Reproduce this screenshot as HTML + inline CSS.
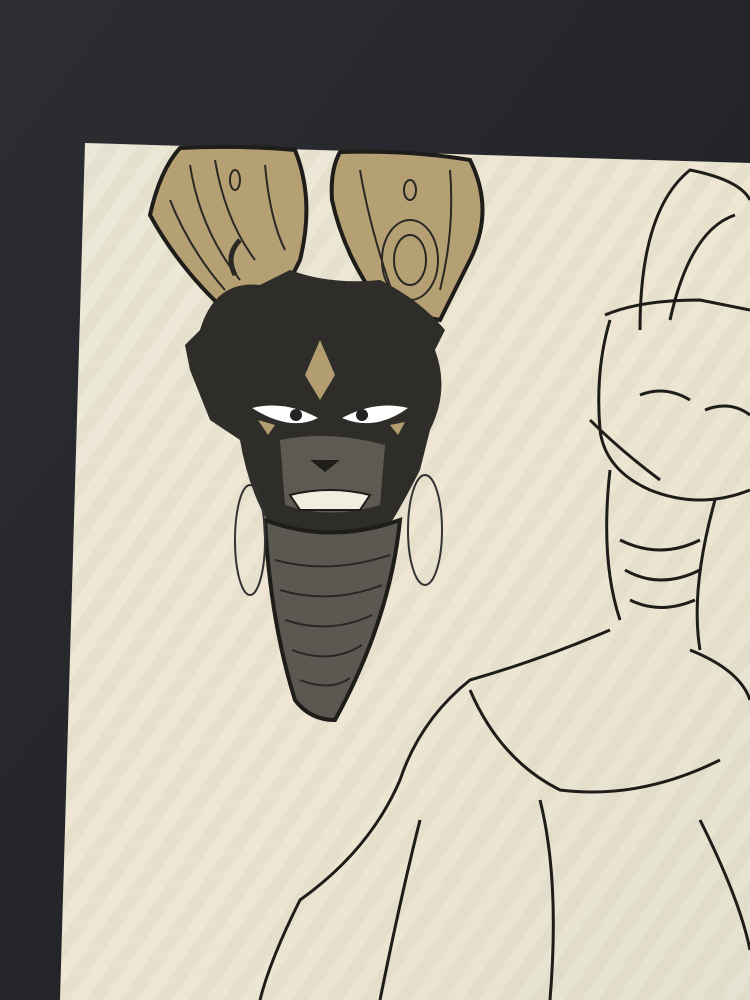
<!DOCTYPE html>
<html><head><meta charset="utf-8"><style>
html,body{margin:0;padding:0;background:#232428;width:750px;height:1000px;overflow:hidden}
svg{display:block}
</style></head><body>
<svg width="750" height="1000" viewBox="0 0 750 1000" xmlns="http://www.w3.org/2000/svg">
<defs>
<linearGradient id="bg" x1="0" y1="0" x2="1" y2="1">
<stop offset="0" stop-color="#2c2e33"/><stop offset="1" stop-color="#1c1d20"/>
</linearGradient>
<linearGradient id="scr" x1="0" y1="0" x2="1" y2="1">
<stop offset="0" stop-color="#ebe8d8"/><stop offset="0.5" stop-color="#eee6d2"/><stop offset="1" stop-color="#e4e2d0"/>
</linearGradient>
<pattern id="moire" width="28" height="28" patternUnits="userSpaceOnUse" patternTransform="rotate(35)">
<rect width="14" height="28" fill="#d8d2be" opacity="0.3"/>
</pattern>
</defs>
<rect width="750" height="1000" fill="url(#bg)"/>
<polygon points="85,143 750,163 750,1000 60,1000" fill="url(#scr)"/>
<polygon points="85,143 750,163 750,1000 60,1000" fill="url(#moire)"/>
<!-- horns -->
<path d="M180,148 Q240,145 295,150 Q315,200 300,260 L280,300 L230,315 Q180,270 150,215 Q160,170 180,148 Z" fill="#b5a074" stroke="#1e1d1a" stroke-width="4"/>
<path d="M340,152 Q410,150 470,160 Q495,210 470,260 L440,320 L385,310 Q345,260 332,200 Q330,170 340,152 Z" fill="#b5a074" stroke="#1e1d1a" stroke-width="4"/>
<g fill="none" stroke="#2a2824" stroke-width="2">
<path d="M190,165 Q200,230 240,280"/><path d="M215,160 Q225,220 255,260"/><path d="M265,165 Q270,220 285,250"/><path d="M170,200 Q190,250 225,290"/>
<ellipse cx="235" cy="180" rx="5" ry="10"/><ellipse cx="410" cy="190" rx="6" ry="10"/>
<ellipse cx="410" cy="260" rx="28" ry="40"/><ellipse cx="410" cy="260" rx="16" ry="25"/>
<path d="M360,170 Q370,230 395,300"/><path d="M450,170 Q455,230 440,290"/>
<path d="M240,240 Q225,255 235,275" stroke-width="5"/>
</g>
<!-- head -->
<path d="M185,345 L200,330 Q215,280 260,285 L290,270 Q330,285 380,280 Q420,300 445,330 L435,350 Q450,390 430,430 L420,470 Q400,510 380,540 L330,555 L280,540 Q250,500 240,440 L210,420 L200,395 L190,370 Z" fill="#2e2d29"/>
<path d="M320,340 L335,375 L320,400 L305,375 Z" fill="#b39e72"/>
<path d="M258,420 L268,435 L275,425 Z" fill="#b39e72"/><path d="M390,425 L398,435 L405,422 Z" fill="#b39e72"/>
<!-- eyes -->
<path d="M252,408 Q285,400 318,418 Q290,432 252,408 Z" fill="#fff"/>
<path d="M342,418 Q375,400 408,408 Q375,432 342,418 Z" fill="#fff"/>
<circle cx="296" cy="415" r="6" fill="#222"/><circle cx="362" cy="415" r="6" fill="#222"/>
<!-- muzzle -->
<path d="M280,440 Q330,430 385,445 L380,505 Q330,520 285,505 Z" fill="#5d5a52"/>
<path d="M290,495 Q330,485 370,495 L360,510 L300,510 Z" fill="#f1eedf" stroke="#1e1d1a" stroke-width="2"/>
<path d="M310,460 L340,460 L325,472 Z" fill="#1e1d1a"/>
<!-- beard -->
<path d="M265,520 Q330,545 400,520 Q390,620 335,720 Q310,720 295,700 Q270,620 265,520 Z" fill="#5a5850" stroke="#1e1d1a" stroke-width="4"/>
<g fill="none" stroke="#2a2824" stroke-width="2">
<path d="M275,560 Q330,575 390,555"/><path d="M280,590 Q330,605 382,585"/><path d="M285,620 Q330,635 372,615"/><path d="M292,650 Q330,665 362,645"/><path d="M300,680 Q330,692 350,678"/>
</g>
<ellipse cx="425" cy="530" rx="17" ry="55" fill="none" stroke="#333" stroke-width="2"/>
<ellipse cx="250" cy="540" rx="15" ry="55" fill="none" stroke="#333" stroke-width="2"/>
<!-- right character -->
<g fill="none" stroke="#1e1d1a" stroke-width="3">
<path d="M640,330 Q640,210 690,170 Q740,180 750,200"/>
<path d="M670,320 Q690,230 735,215"/>
<path d="M605,315 Q640,300 700,300 L750,310"/>
<path d="M610,320 Q595,370 600,430 Q605,470 650,490 Q700,510 750,490"/>
<path d="M590,420 Q620,450 660,480"/>
<path d="M640,395 Q665,385 690,400"/><path d="M705,410 Q730,400 750,415"/>
<path d="M610,470 Q600,560 620,620"/><path d="M715,500 Q690,590 700,650"/>
<path d="M620,540 Q660,560 700,540"/><path d="M625,570 Q660,590 700,570"/><path d="M630,600 Q660,615 695,600"/>
<path d="M610,630 Q540,660 470,680 Q420,720 400,780 Q370,850 300,900 Q270,960 260,1000"/>
<path d="M690,650 Q740,670 750,700"/>
<path d="M470,690 Q500,760 560,790 Q640,800 720,760"/>
<path d="M540,800 Q560,880 550,1000"/><path d="M700,820 Q740,900 750,950"/>
<path d="M420,820 Q400,900 380,1000"/>
</g>
</svg>
</body></html>
